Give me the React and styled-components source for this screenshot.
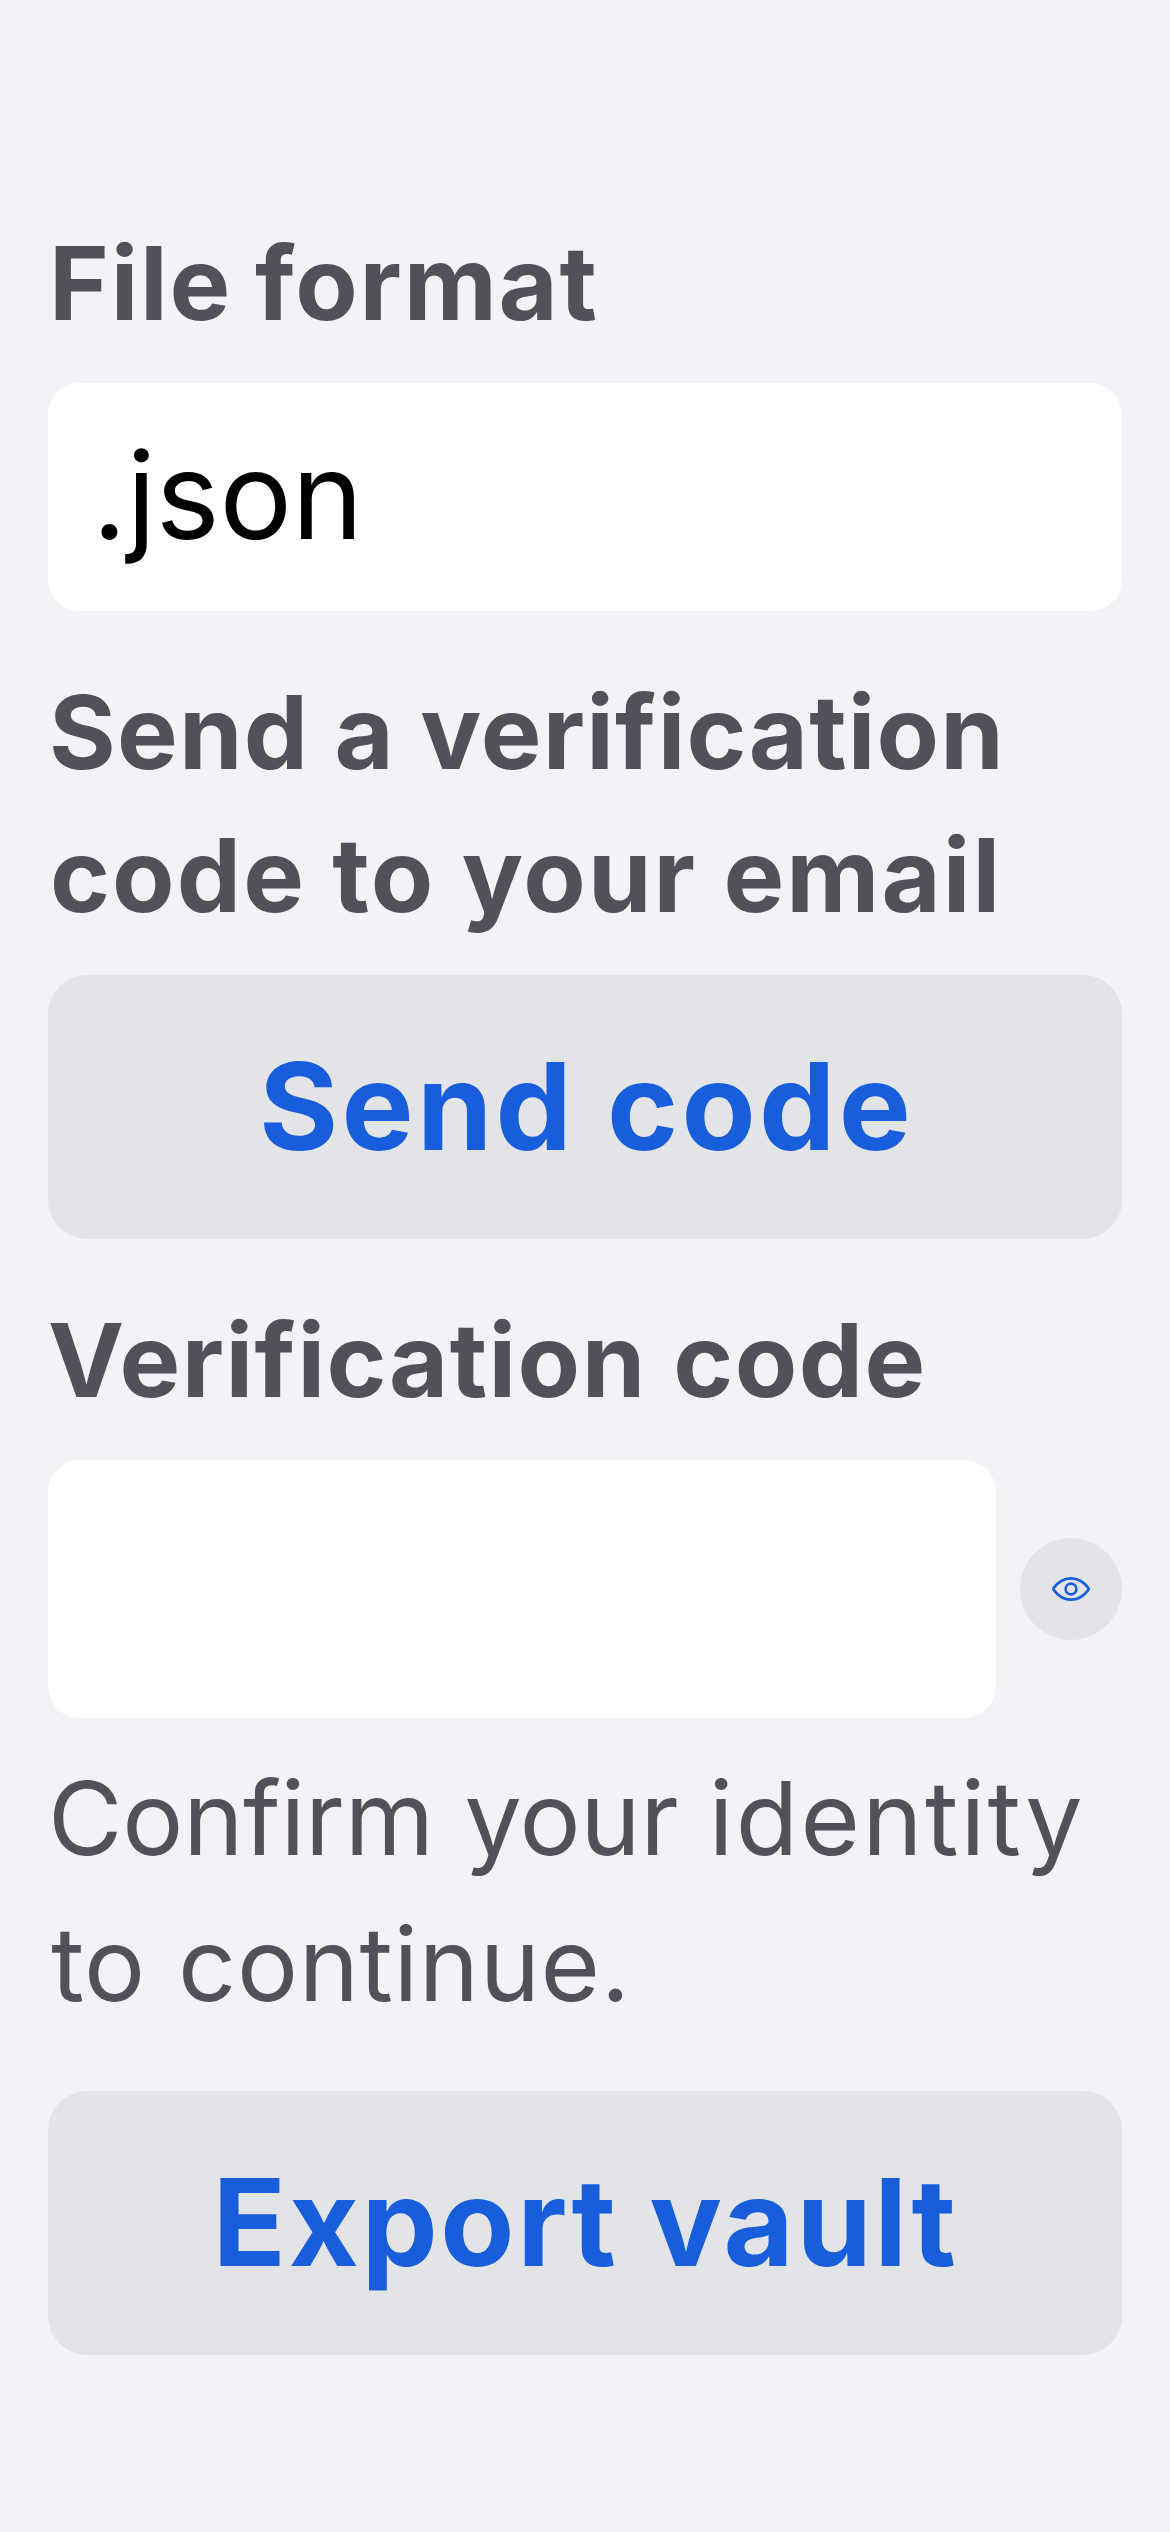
import React from "react";
import styled, { createGlobalStyle } from "styled-components";

const GlobalStyle = createGlobalStyle`
  *, *::before, *::after { box-sizing: border-box; }
  html, body { margin: 0; background: #f3f2f7; }
`;

const Screen = styled.main`
  width: 1170px;
  height: 2532px;
  padding: 212px 48px 0;
  display: flex;
  flex-direction: column;
  overflow: hidden;
  background: #f3f2f7;
  color: #51515a;
  font-family: Inter, "Open Sans", sans-serif;
`;

const Section = styled.section`
  display: flex;
  flex-direction: column;
  gap: 28px;
  margin-bottom: ${(p) => p.$after}px;
`;

const Label = styled.h2`
  margin: 0;
  font-size: 102px;
  line-height: 143px;
  font-weight: 700;
`;

const Hint = styled.p`
  margin: 0 0 54px;
  font-size: 102px;
  line-height: 146px;
  font-weight: 400;
`;

const Line = styled.span`
  display: block;
  white-space: nowrap;
  letter-spacing: ${(p) => p.$track || 0}px;
  word-spacing: ${(p) => p.$words || 0}px;
  padding-left: ${(p) => p.$indent || 0}px;
`;

const Word = styled.span`
  letter-spacing: ${(p) => p.$track}px;
`;

const Field = styled.div`
  height: 228px;
  padding: 0 44px 4px;
  display: flex;
  align-items: center;
  border-radius: 32px;
  background: #ffffff;
  color: #000000;
  font-size: 121px;
  line-height: 170px;
`;

const CodeRow = styled.div`
  display: flex;
  align-items: center;
  gap: 24px;
`;

const CodeInput = styled.input`
  flex: 1;
  min-width: 0;
  height: 258px;
  padding: 0 44px;
  border: 0;
  outline: 0;
  border-radius: 32px;
  background: #ffffff;
  font: inherit;
  font-size: 121px;
`;

const IconButton = styled.button`
  width: 102px;
  height: 102px;
  padding: 0;
  border: 0;
  border-radius: 50%;
  display: flex;
  align-items: center;
  justify-content: center;
  background: #e2e4e8;
  color: #175ddc;
`;

const Button = styled.button`
  width: 100%;
  height: 264px;
  padding: 0 0 2px;
  border: 0;
  border-radius: 39px;
  display: flex;
  align-items: center;
  justify-content: center;
  background: #e2e4e8;
  color: #175ddc;
  font-family: inherit;
  font-size: 121px;
  line-height: 170px;
  font-weight: 700;
`;

const EyeIcon = () => (
  <svg width="38" height="24" viewBox="0 0 38 24" fill="none" stroke="currentColor" strokeWidth="2.6" strokeLinejoin="round">
    <path d="M1.8 13.1C1.2 12.4 1.2 11.6 1.8 10.9C6.2 5 12 1.4 19 1.4S31.8 5 36.2 10.9C36.8 11.6 36.8 12.4 36.2 13.1C31.8 19 26 22.6 19 22.6S6.2 19 1.8 13.1Z" />
    <circle cx="19" cy="12" r="5.4" />
  </svg>
);

export default function App() {
  return (
    <>
      <GlobalStyle />
      <Screen>
        <Section $after={50}>
          <Label><Line $track={1.8} $words={-3} $indent={1}>File format</Line></Label>
          <Field><Line $track={-0.2}>.json</Line></Field>
        </Section>
        <Section $after={50}>
          <Label>
            <Line $track={1.2} $indent={1}>Send a verification</Line>
            <Line $track={2.1} $indent={2}>code to your email</Line>
          </Label>
          <Button type="button"><Line $track={3.3} $indent={3}>Send code</Line></Button>
        </Section>
        <Section $after={27}>
          <Label><Line $track={1.47} $words={1}>Verification code</Line></Label>
          <CodeRow>
            <CodeInput type="password" aria-label="Verification code" />
            <IconButton type="button" aria-label="Toggle visibility"><EyeIcon /></IconButton>
          </CodeRow>
        </Section>
        <Hint>
          <Line $words={2}>
            <Word $track={-0.27}>Confirm</Word> <Word $track={-0.4}>your</Word> <Word $track={2.3}>identity</Word>
          </Line>
          <Line $track={0.6} $words={3} $indent={3}>to continue.</Line>
        </Hint>
        <Button type="button"><Line $track={2.6} $indent={1}>Export vault</Line></Button>
      </Screen>
    </>
  );
}
